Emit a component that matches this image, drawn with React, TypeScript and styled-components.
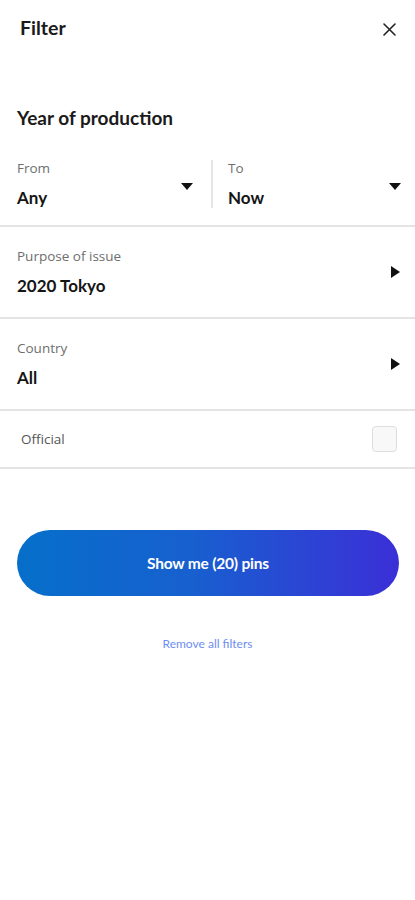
import React from "react";
import styled, { createGlobalStyle } from "styled-components";

const Global = createGlobalStyle`
  html, body { margin: 0; padding: 0; background: #ffffff; }
  body { font-family: Lato, "Open Sans", sans-serif; -webkit-font-smoothing: antialiased; }
  * { box-sizing: border-box; }
`;

const Page = styled.div`
  width: 415px;
  min-height: 900px;
  background: #fff;
  display: flex;
  flex-direction: column;
`;

const Header = styled.header`
  height: 56px;
  display: flex;
  align-items: center;
  justify-content: space-between;
  padding: 0 16px 0 20px;
`;

const Title = styled.h1`
  margin: 0;
  font-family: Lato, sans-serif;
  font-weight: 700;
  font-size: 19.5px;
  line-height: 24px;
  color: #1a1a1a;
`;

const CloseButton = styled.button`
  width: 20px;
  height: 20px;
  padding: 0;
  border: none;
  background: none;
  display: flex;
  align-items: center;
  justify-content: center;
  margin-top: 2px;
`;

const SectionTitle = styled.h2`
  margin: 50px 0 9px;
  padding-left: 17px;
  font-family: Lato, sans-serif;
  font-weight: 700;
  font-size: 19px;
  line-height: 24px;
  color: #1a1a1a;
`;

const RangeRow = styled.div`
  display: flex;
  padding: 21px 14px 17px 17px;
  border-bottom: 2px solid #e4e4e4;
`;

const RangeCol = styled.div<{ $w?: number; $pl?: number; $pr?: number }>`
  ${(p) => (p.$w ? `width: ${p.$w}px; flex: none;` : "flex: 1;")}
  padding-left: ${(p) => p.$pl ?? 0}px;
  padding-right: ${(p) => p.$pr ?? 0}px;
  display: flex;
  align-items: center;
  justify-content: space-between;
`;

const VDivider = styled.div`
  width: 2px;
  align-self: stretch;
  background: #e6e6e6;
`;

const FieldText = styled.div`
  display: flex;
  flex-direction: column;
  gap: 12px;
`;

const Label = styled.span`
  font-family: "Open Sans", sans-serif;
  font-size: 13.5px;
  line-height: 16px;
  color: #6e6e6e;
`;

const Value = styled.span`
  font-family: Lato, sans-serif;
  font-weight: 700;
  font-size: 17px;
  line-height: 20px;
  color: #151515;
`;

const NavRow = styled.div`
  display: flex;
  align-items: center;
  justify-content: space-between;
  padding: 21px 15px 21px 17px;
  border-bottom: 2px solid #e4e4e4;
`;

const CheckRow = styled.label`
  display: flex;
  align-items: center;
  justify-content: space-between;
  height: 58px;
  padding: 0 18px 0 21px;
  border-bottom: 2px solid #e4e4e4;
`;

const CheckLabel = styled.span`
  font-family: "Open Sans", sans-serif;
  font-size: 13.5px;
  color: #555;
`;

const CheckBox = styled.span`
  width: 25px;
  height: 26px;
  border: 1.5px solid #dedede;
  border-radius: 4px;
  background: #f8f8f8;
`;

const Caret = styled.svg<{ $mt?: number }>`
  flex: none;
  margin-top: ${(p) => p.$mt ?? 0}px;
`;

const PrimaryButton = styled.button`
  margin: 61px 16px 0 17px;
  height: 66px;
  border: none;
  border-radius: 33px;
  background: linear-gradient(90deg, #066fca 0%, #1760cf 45%, #3b2fd7 100%);
  color: #fff;
  font-family: Lato, sans-serif;
  font-weight: 700;
  font-size: 15.5px;
  letter-spacing: -0.2px;
`;

const LinkButton = styled.button`
  margin: 40px auto 0;
  border: none;
  background: none;
  padding: 0;
  font-family: Lato, sans-serif;
  font-size: 12px;
  line-height: 16px;
  color: #6d8ef0;
`;

const DownCaret = () => (
  <Caret width="12" height="7" viewBox="0 0 12 7" $mt={4}>
    <path d="M0 0H12L6 7Z" fill="#111" />
  </Caret>
);

const RightCaret = () => (
  <Caret width="9" height="12" viewBox="0 0 9 12">
    <path d="M0 0V12L9 6Z" fill="#111" />
  </Caret>
);

export default function App() {
  return (
    <Page>
      <Global />
      <Header>
        <Title>Filter</Title>
        <CloseButton aria-label="Close">
          <svg width="13" height="13" viewBox="0 0 13 13">
            <path d="M1 1L12 12M12 1L1 12" stroke="#222" strokeWidth="1.6" strokeLinecap="round" />
          </svg>
        </CloseButton>
      </Header>

      <SectionTitle>Year of production</SectionTitle>
      <RangeRow>
        <RangeCol $w={194} $pr={18}>
          <FieldText>
            <Label>From</Label>
            <Value>Any</Value>
          </FieldText>
          <DownCaret />
        </RangeCol>
        <VDivider />
        <RangeCol $pl={15}>
          <FieldText>
            <Label>To</Label>
            <Value>Now</Value>
          </FieldText>
          <DownCaret />
        </RangeCol>
      </RangeRow>

      <NavRow>
        <FieldText>
          <Label>Purpose of issue</Label>
          <Value>2020 Tokyo</Value>
        </FieldText>
        <RightCaret />
      </NavRow>

      <NavRow>
        <FieldText>
          <Label>Country</Label>
          <Value>All</Value>
        </FieldText>
        <RightCaret />
      </NavRow>

      <CheckRow>
        <CheckLabel>Official</CheckLabel>
        <CheckBox />
      </CheckRow>

      <PrimaryButton>Show me (20) pins</PrimaryButton>
      <LinkButton>Remove all filters</LinkButton>
    </Page>
  );
}
